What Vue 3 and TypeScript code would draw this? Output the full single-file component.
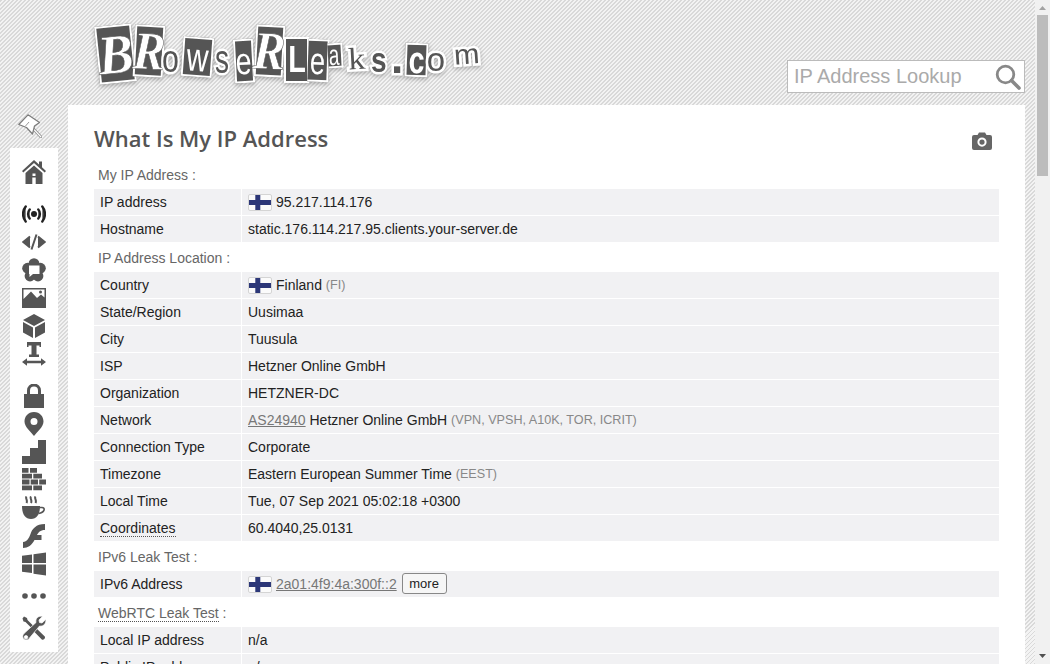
<script setup lang="ts">
interface Row {
  k: string
  dotted?: boolean
  flag?: boolean
  link?: string
  text?: string
  note?: string
  more?: boolean
}
interface Section {
  label: string
  labelDotted?: string
  rows: Row[]
}
interface Letter {
  c: string
  x: number
  y: number
  w: number
  h: number
  r: number
  s: number
  sx: number
  kind: string
}

const letters: Letter[] = [
  { c: 'B', x: 7, y: 10, w: 37, h: 58, r: -6, s: 56, sx: 0.95, kind: 'chip goth' },
  { c: 'R', x: 44, y: 10, w: 30, h: 52, r: 3, s: 54, sx: 0.9, kind: 'chip goth' },
  { c: 'o', x: 71, y: 26, w: 20, h: 36, r: 0, s: 38, sx: 0.8, kind: 'free' },
  { c: 'w', x: 92, y: 22, w: 31, h: 40, r: 4, s: 40, sx: 0.75, kind: 'chip' },
  { c: 's', x: 123, y: 26, w: 18, h: 36, r: 0, s: 40, sx: 0.7, kind: 'free' },
  { c: 'e', x: 144, y: 24, w: 20, h: 44, r: -3, s: 38, sx: 0.75, kind: 'chip' },
  { c: 'R', x: 165, y: 10, w: 29, h: 52, r: 3, s: 54, sx: 0.9, kind: 'chip goth' },
  { c: 'L', x: 194, y: 22, w: 25, h: 46, r: 0, s: 36, sx: 0.8, kind: 'chip left bold' },
  { c: 'e', x: 218, y: 24, w: 21, h: 43, r: 2, s: 38, sx: 0.72, kind: 'chip flush' },
  { c: 'a', x: 238, y: 28, w: 15, h: 25, r: -3, s: 29, sx: 0.65, kind: 'chip flush' },
  { c: 'k', x: 256, y: 27, w: 21, h: 33, r: -3, s: 31, sx: 1.1, kind: 'free cut' },
  { c: 's', x: 280, y: 28, w: 18, h: 32, r: 0, s: 35, sx: 0.8, kind: 'free bold' },
  { c: '.', x: 302, y: 26, w: 10, h: 34, r: 0, s: 44, sx: 1, kind: 'free bold' },
  { c: 'c', x: 315, y: 28, w: 23, h: 34, r: 2, s: 38, sx: 0.75, kind: 'chip bold' },
  { c: 'o', x: 335, y: 29, w: 22, h: 30, r: 0, s: 33, sx: 1, kind: 'free' },
  { c: 'm', x: 361, y: 27, w: 31, h: 26, r: -4, s: 28, sx: 1.1, kind: 'free' },
]

const sections: Section[] = [
  {
    label: 'My IP Address :',
    rows: [
      { k: 'IP address', flag: true, text: '95.217.114.176' },
      { k: 'Hostname', text: 'static.176.114.217.95.clients.your-server.de' },
    ],
  },
  {
    label: 'IP Address Location :',
    rows: [
      { k: 'Country', flag: true, text: 'Finland', note: '(FI)' },
      { k: 'State/Region', text: 'Uusimaa' },
      { k: 'City', text: 'Tuusula' },
      { k: 'ISP', text: 'Hetzner Online GmbH' },
      { k: 'Organization', text: 'HETZNER-DC' },
      { k: 'Network', link: 'AS24940', text: 'Hetzner Online GmbH', note: '(VPN, VPSH, A10K, TOR, ICRIT)' },
      { k: 'Connection Type', text: 'Corporate' },
      { k: 'Timezone', text: 'Eastern European Summer Time', note: '(EEST)' },
      { k: 'Local Time', text: 'Tue, 07 Sep 2021 05:02:18 +0300' },
      { k: 'Coordinates', dotted: true, text: '60.4040,25.0131' },
    ],
  },
  {
    label: 'IPv6 Leak Test :',
    rows: [{ k: 'IPv6 Address', flag: true, link: '2a01:4f9:4a:300f::2', more: true }],
  },
  {
    label: ' :',
    labelDotted: 'WebRTC Leak Test',
    rows: [
      { k: 'Local IP address', text: 'n/a' },
      { k: 'Public IP address', text: 'n/a' },
    ],
  },
]
</script>

<template>
  <div class="shell">
    <div class="page">
      <header class="top">
        <div class="logo">
          <span
            v-for="(l, i) in letters"
            :key="i"
            class="ltr"
            :class="l.kind"
            :style="{
              left: l.x + 'px',
              top: l.y + 'px',
              width: l.w + 'px',
              height: l.h + 'px',
              fontSize: l.s + 'px',
              transform: 'rotate(' + l.r + 'deg)',
            }"
            ><span class="glyph" :style="{ transform: 'scaleX(' + l.sx + ')' }">{{ l.c }}</span></span
          >
        </div>
        <form class="search" @submit.prevent>
          <input class="search-input" type="text" placeholder="IP Address Lookup" />
          <button class="search-btn" type="button" aria-label="Search">
            <svg viewBox="0 0 26 26" width="26" height="26">
              <circle cx="10.5" cy="10.5" r="8.3" fill="none" stroke="#888" stroke-width="2.8" />
              <path d="M16.5 16.5L24 24" stroke="#888" stroke-width="3.6" stroke-linecap="round" />
            </svg>
          </button>
        </form>
      </header>

      <div class="below">
        <aside class="rail">
          <div class="pin">
            <svg viewBox="0 0 24 24" width="24" height="24">
              <path d="M15.5 15L23 23" stroke="#888" stroke-width="2.6" stroke-linecap="round" />
              <path d="M15.5 15L23 23" stroke="#fff" stroke-width="1.1" stroke-linecap="round" />
              <path d="M10 .8L.8 10.5L8.5 13.5L14.5 20L16.5 12L21.5 8.5z" fill="#fff" stroke="#7c7c7c" stroke-width="1.2" stroke-linejoin="round" />
              <path d="M11 8L7.5 12" stroke="#999" stroke-width="1" />
            </svg>
          </div>
          <nav class="side">
            <div class="group">
              <a class="ico">
                <svg viewBox="0 0 24 24">
                  <path d="M12 0L0 11l1.3 1.5L12 3l10.7 9.5L24 11l-4-3.7V1.5h-3v3z" />
                  <path fill-rule="evenodd" d="M3.5 13L12 5.5L20.5 13V24H13.7V17.5H10.3V24H3.5zM10.5 13.5h3v2.5h-3z" />
                </svg>
              </a>
            </div>
            <div class="group">
              <a class="ico">
                <svg viewBox="0 0 24 24" fill="none" stroke="#222" stroke-width="2.4" stroke-linecap="round">
                  <circle cx="12" cy="12" r="3" fill="#222" stroke="none" />
                  <path d="M7.7 7.5a7 7 0 0 0 0 9M16.3 7.5a7 7 0 0 1 0 9M3.7 4.5a12 12 0 0 0 0 15M20.3 4.5a12 12 0 0 1 0 15" />
                </svg>
              </a>
              <a class="ico">
                <svg viewBox="0 0 24 24" fill="none" stroke="#555" stroke-width="2">
                  <path d="M8 6.5L1.2 12L8 17.5M16 6.5L22.8 12L16 17.5M14.5 4.5L9.5 19.5" />
                </svg>
              </a>
              <a class="ico">
                <svg viewBox="0 0 24 24">
                  <circle cx="12" cy="5.6" r="5.4" />
                  <circle cx="18.4" cy="10.2" r="5.4" />
                  <circle cx="16" cy="18" r="5.4" />
                  <circle cx="8" cy="18" r="5.4" />
                  <circle cx="5.6" cy="10.2" r="5.4" />
                  <circle cx="12" cy="12" r="6" />
                  <path fill="#fff" d="M7 7.5h10.5v8.5H11l-3.5 3V16H7z" />
                </svg>
              </a>
              <a class="ico">
                <svg viewBox="0 0 24 24">
                  <path d="M0 2H24V22H0z" />
                  <path fill="#fff" d="M1.5 3.5H22.5V11.5L19 8.5L15 12L9 5.5L1.5 13z" />
                  <circle cx="18.5" cy="6" r="1.5" />
                </svg>
              </a>
              <a class="ico">
                <svg viewBox="0 0 24 24">
                  <path d="M12 0L23 6L12 12L1 6zM1 8L11 13.5V24L1 18.5zM23 8L13 13.5V24L23 18.5z" />
                </svg>
              </a>
              <a class="ico">
                <svg viewBox="0 0 24 24">
                  <path d="M5 0H19V5H17.5V3.5H14.5V12.5H17V15H7V12.5H9.5V3.5H6.5V5H5z" />
                  <path d="M0 20L5 16.2V18.8H19V16.2L24 20L19 23.8V21.2H5V23.8z" />
                </svg>
              </a>
            </div>
            <div class="group">
              <a class="ico">
                <svg viewBox="0 0 24 24">
                  <path d="M2 10H22V24H2z" />
                  <path d="M6.5 11V6.5a5.5 5.5 0 0 1 11 0V11" fill="none" stroke="#555" stroke-width="3" />
                </svg>
              </a>
              <a class="ico">
                <svg viewBox="0 0 24 24">
                  <path fill-rule="evenodd" d="M12 0C6 0 2.5 4.5 2.5 9.5C2.5 15 9 20 12 24C15 20 21.5 15 21.5 9.5C21.5 4.5 18 0 12 0zM12 6a3.5 3.5 0 1 1 0 7a3.5 3.5 0 1 1 0-7z" />
                </svg>
              </a>
              <a class="ico">
                <svg viewBox="0 0 24 24"><path d="M16 0H24V24H0V16H8V8H16z" /></svg>
              </a>
              <a class="ico">
                <svg viewBox="0 0 24 24">
                  <path d="M0 0h6.5v4.8H0zM8 0h7v4.8H8zM0 5.8h10v4.8H0zM11.3 5.8h8.7v4.8h-8.7zM0 11.6h7.5v4.8H0zM8.7 11.6h7.3v4.8H8.7zM17.2 11.6H24v4.8h-6.8zM0 17.4h10v4.8H0zM11.3 17.4H20v4.8h-8.7z" />
                </svg>
              </a>
              <a class="ico">
                <svg viewBox="0 0 24 24">
                  <path d="M4.5 0.5c-1.5 2 1.5 3 0 6.5M9 0.5c-1.5 2 1.5 3 0 6.5M13.5 0.5c-1.5 2 1.5 3 0 6.5" fill="none" stroke="#555" stroke-width="2" />
                  <path d="M0 10H18C18 18 15 23 9 23C3 23 0 18 0 10z" />
                  <path d="M17.5 11.5h2.5c3.5 0 3 5-3.5 6" fill="none" stroke="#555" stroke-width="1.6" />
                </svg>
              </a>
              <a class="ico">
                <svg viewBox="0 0 24 24">
                  <path d="M23 0V6C18 6 16.5 8.5 15 11H19.5V16H12.5C10 21 6 24 1 24V18C5 18 7 14 8.5 10C10 5 14 0 23 0z" />
                </svg>
              </a>
              <a class="ico">
                <svg viewBox="0 0 24 24">
                  <path d="M0 3.8L10 2.6V11H0zM11.5 2.3L24 .5V11H11.5zM0 12.5H10V21L0 19.8zM11.5 12.5H24V23.5L11.5 21.7z" />
                </svg>
              </a>
            </div>
            <div class="group dots">
              <a class="ico">
                <svg viewBox="0 0 24 24">
                  <circle cx="3" cy="12" r="2.8" />
                  <circle cx="12" cy="12" r="2.8" />
                  <circle cx="21" cy="12" r="2.8" />
                </svg>
              </a>
            </div>
            <div class="group dots">
              <a class="ico">
                <svg viewBox="0 0 24 24">
                  <path d="M2 0.5L5 2L5.5 4L14 12.5L12 14.5L3.5 6L1.5 5.5L0.5 2.5z" />
                  <path d="M13 11L22.8 20.5a2.3 2.3 0 0 1-3 3L10.5 14z" />
                  <path fill-rule="evenodd" stroke="#fff" stroke-width=".7" d="M23.8 3.5L20 7L17.5 6.5L17 4L20.5 .3C17 -.5 13 2 14 6.5L2 17.5C-.5 20 1 24 4 24C6 24 7 23 7.5 22L17.5 10C21.5 11 24.5 7 23.8 3.5zM4 19.5a1.8 1.8 0 1 1 0 3.6a1.8 1.8 0 1 1 0-3.6z" />
                </svg>
              </a>
            </div>
          </nav>
        </aside>

        <main class="panel">
          <div class="head">
            <h1 class="title">What Is My IP Address</h1>
            <svg class="cam" viewBox="0 0 20 18" width="20" height="18">
              <path fill-rule="evenodd" d="M2 3H5.5L7 .5H13L14.5 3H18a2 2 0 0 1 2 2V16a2 2 0 0 1-2 2H2a2 2 0 0 1-2-2V5a2 2 0 0 1 2-2zM10 5.5a4.6 4.6 0 1 0 0 9.2a4.6 4.6 0 1 0 0-9.2z" />
              <circle cx="10" cy="10.1" r="2.6" />
            </svg>
          </div>

          <section v-for="s in sections" :key="s.label + s.labelDotted">
            <div class="sec-label">
              <span v-if="s.labelDotted" class="dot-u">{{ s.labelDotted }}</span
              >{{ s.label }}
            </div>
            <div class="tbl">
              <div v-for="r in s.rows" :key="r.k" class="row">
                <div class="cell">
                  <span :class="{ 'dot-u': r.dotted }">{{ r.k }}</span>
                </div>
                <div class="cell val">
                  <svg v-if="r.flag" class="flag" viewBox="0 0 24 17" width="24" height="17">
                    <rect x=".5" y=".5" width="23" height="16" rx="1.5" fill="#fbfbfb" stroke="#d4d4d4" />
                    <path d="M1 6H7.3V1H12.3V6H23V11H12.3V16H7.3V11H1z" fill="#2c3778" />
                  </svg>
                  <a v-if="r.link" class="lnk">{{ r.link }}</a>
                  <span v-if="r.text">{{ r.text }}</span>
                  <span v-if="r.note" class="note">{{ r.note }}</span>
                  <button v-if="r.more" class="more" type="button">more</button>
                </div>
              </div>
            </div>
          </section>
        </main>
      </div>
    </div>

    <div class="sbar" aria-hidden="true">
      <div class="arr up"></div>
      <div class="thumb"></div>
      <div class="arr down"></div>
    </div>
  </div>
</template>

<style>
html,
body {
  margin: 0;
  height: 100%;
  overflow: hidden;
}
</style>

<style scoped>
.shell {
  display: flex;
  width: 1050px;
  height: 664px;
  overflow: hidden;
  font-family: 'Liberation Sans', Arial, sans-serif;
  font-size: 14px;
  color: #222;
}
.page {
  flex: 1;
  min-width: 0;
  display: flex;
  flex-direction: column;
  background: repeating-linear-gradient(-45deg, #d9d9d9 0, #d9d9d9 1.4px, #f3f3f3 1.4px, #f3f3f3 2.83px);
}
.top {
  height: 105px;
  flex: none;
  display: flex;
  padding: 15px 10px 0 90px;
  box-sizing: border-box;
}
.logo {
  position: relative;
  width: 400px;
  height: 80px;
  filter: drop-shadow(0 2px 2px rgba(0, 0, 0, 0.25));
}
.ltr {
  position: absolute;
  display: flex;
  align-items: center;
  justify-content: center;
  box-sizing: border-box;
  line-height: 1;
  color: #555;
}
.glyph {
  display: block;
  flex: none;
}
.chip {
  background: #555;
  border: 2px solid #fff;
  color: #fff;
}
.flush {
  border-left: 0;
}
.goth {
  font-family: 'Liberation Serif', serif;
  font-weight: 700;
  font-style: italic;
  -webkit-text-stroke: 0.6px #555;
}
.free {
  -webkit-text-stroke: 5px #fff;
  paint-order: stroke fill;
}
.bold {
  font-weight: 700;
}
.left {
  justify-content: flex-start;
}
.cut {
  font-family: 'Liberation Serif', serif;
}
.search {
  margin: 45px 0 0 auto;
  width: 238px;
  height: 33px;
  box-sizing: border-box;
  display: flex;
  align-items: center;
  background: #fff;
  border: 1px solid #bbb;
}
.search-input {
  flex: 1;
  min-width: 0;
  border: 0;
  outline: 0;
  padding: 0 0 0 6px;
  background: transparent;
  font: 20px 'Liberation Sans', Arial, sans-serif;
}
.search-input::placeholder {
  color: #aaa;
  opacity: 1;
}
.search-btn {
  flex: none;
  display: flex;
  width: 30px;
  height: 26px;
  padding: 0 0 0 1px;
  border: 0;
  background: none;
}
.below {
  flex: 1;
  min-height: 0;
  display: flex;
}
.rail {
  width: 68px;
  flex: none;
  box-sizing: border-box;
  padding-left: 10px;
}
.pin {
  height: 43px;
  display: flex;
  padding: 9px 0 0 8px;
  box-sizing: border-box;
}
.side {
  width: 48px;
  height: 504px;
  box-sizing: border-box;
  padding-top: 10px;
  background: #fff;
  display: flex;
  flex-direction: column;
  gap: 14px;
}
.group {
  display: flex;
  flex-direction: column;
}
.group + .dots {
  margin-top: -10px;
}
.ico {
  height: 28px;
  display: flex;
  align-items: center;
  justify-content: center;
}
.ico svg {
  width: 24px;
  height: 24px;
  fill: #555;
  display: block;
}
.panel {
  flex: 1;
  min-width: 0;
  margin-right: 10px;
  padding: 20px 26px 0;
  background: #fff;
}
.head {
  display: flex;
  align-items: center;
  justify-content: space-between;
  height: 28px;
  margin-bottom: 6px;
}
.title {
  margin: 0;
  font: 600 22px/26px 'Open Sans', sans-serif;
  color: #555;
  align-self: flex-start;
}
.cam {
  fill: #666;
  margin: 4px 7px 0 0;
}
.sec-label {
  height: 30px;
  padding-left: 4px;
  line-height: 32px;
  color: #666;
  white-space: pre;
}
.tbl {
  display: flex;
  flex-direction: column;
  gap: 1px;
}
.row {
  display: grid;
  grid-template-columns: 147px 1fr;
  gap: 1px;
  height: 26px;
}
.cell {
  background: #f1f1f3;
  padding: 0 6px;
  line-height: 26px;
  white-space: nowrap;
}
.val {
  display: flex;
  align-items: center;
}
.flag {
  margin-right: 4px;
  flex: none;
}
.lnk {
  color: #777;
  text-decoration: underline;
  margin-right: 3.9px;
}
.note {
  margin-left: 3.9px;
  font-size: 12.6px;
  color: #888;
}
.dot-u {
  border-bottom: 1px dotted #555;
}
.more {
  height: 21px;
  width: 45px;
  margin: -1px 0 0 1px;
  padding: 0;
  box-sizing: border-box;
  border: 1px solid #888;
  border-radius: 3px;
  background: #f6f6f6;
  color: #222;
  font: 13px 'Liberation Sans', Arial, sans-serif;
}
.sbar {
  width: 15px;
  flex: none;
  background: #f1f1f1;
  position: relative;
}
.thumb {
  position: absolute;
  left: 2px;
  top: 15px;
  width: 11px;
  height: 161px;
  background: #bcbcbc;
}
.arr {
  position: absolute;
  left: 4px;
  width: 7px;
  height: 4px;
}
.up {
  top: 6px;
  background: #a3a3a3;
  clip-path: polygon(50% 0, 100% 100%, 0 100%);
}
.down {
  bottom: 6px;
  background: #505050;
  clip-path: polygon(0 0, 100% 0, 50% 100%);
}
</style>
